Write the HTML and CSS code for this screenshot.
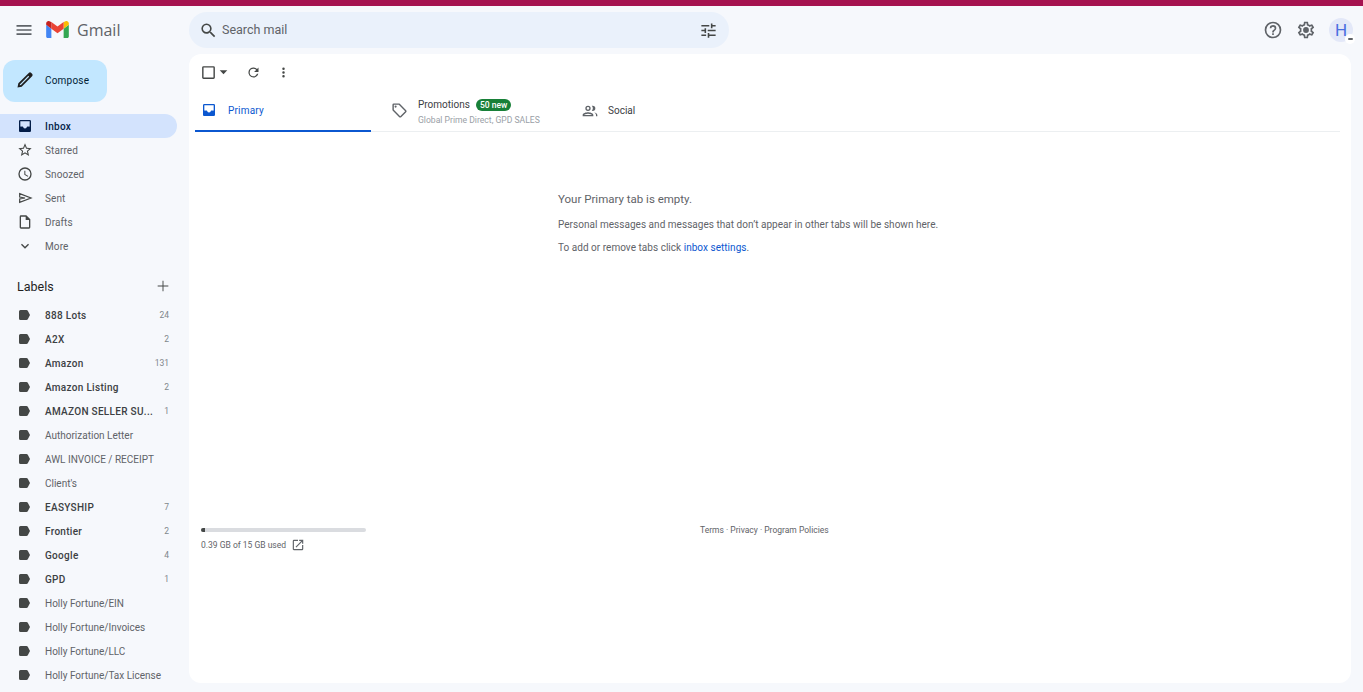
FILE: index.html
```html
<!DOCTYPE html>
<html>
<head>
    <title>Inbox - Gmail</title>
    <link rel="stylesheet" href="styles.css">
</head>
<body>
    <svg class="sprite" width="0" height="0">
        <symbol id="tag" viewBox="0 0 16 16"><path d="M4.500 3h5.900c.6 0 1.100.3 1.400.7L14 8l-2.200 4.300c-.3.4-.8.7-1.400.7H4.500A1.500 1.500 0 0 1 3 11.500v-7A1.500 1.500 0 0 1 4.500 3z"/></symbol>
        <symbol id="tray" viewBox="0 0 24 24"><path d="M19 3H5a2 2 0 0 0-2 2v14c0 1.100.9 2 2 2h14a2 2 0 0 0 2-2V5a2 2 0 0 0-2-2zm0 10h-4a3 3 0 0 1-6 0H5V5h14z"/><path d="M4 13h5a3 3 0 0 0 6 0h5v7H4z"/></symbol>
    </svg>
    <div class="top-strip"></div>
    <div class="app">
        <aside class="sidebar">
            <div class="brand">
                <svg class="menu-icon" viewBox="0 0 24 24" width="20" height="20"><path fill="#5f6368" d="M3 18h18v-2H3v2zm0-5h18v-2H3v2zm0-7v2h18V6H3z"/></svg>
                <svg class="logo" viewBox="0 0 24 18" width="23" height="17">
                    <path fill="#4285f4" d="M0 16.400C0 17.300.7 18 1.600 18h3.900V8.200L0 4.100z"/>
                    <path fill="#34a853" d="M18.500 18h3.900c.9 0 1.600-.7 1.600-1.600V4.100l-5.500 4.100z"/>
                    <path fill="#fbbc04" d="M18.500 1v7.200L24 4.100V2.500c0-2-2.300-3.200-3.900-2z"/>
                    <path fill="#ea4335" d="M5.500 8.200V1L12 5.900 18.500 1v7.200L12 13.100z"/>
                    <path fill="#c5221f" d="M0 2.500v1.600l5.500 4.100V1L3.900.5C2.300-.7 0 .5 0 2.500z"/>
                </svg>
                <span class="brand-name">Gmail</span>
            </div>
            <button class="compose">
                <svg viewBox="0 0 24 24" width="20" height="20"><path fill="#1f1f1f" d="M3 21l1-5L16.500 3.500a2.100 2.100 0 0 1 3 0l1 1a2.100 2.100 0 0 1 0 3L8 20zm2.600-2.600l1.500-.4L17 8l-1-1L6 17z"/></svg>
                <span>Compose</span>
            </button>
            <nav class="nav">
                <a class="nav-item active">
                    <svg class="tray-dark" width="16" height="16"><use href="#tray"/></svg>
                    <span>Inbox</span>
                </a>
                <a class="nav-item">
                    <svg viewBox="0 0 24 24" width="16" height="16"><path fill="#444746" d="M22 9.240l-7.190-.62L12 2 9.190 8.630 2 9.240l5.460 4.730L5.820 21 12 17.270 18.180 21l-1.630-7.030zM12 15.400l-3.760 2.270 1-4.280-3.320-2.880 4.380-.38L12 6.100l1.710 4.040 4.380.38-3.320 2.880 1 4.280z"/></svg>
                    <span>Starred</span>
                </a>
                <a class="nav-item">
                    <svg viewBox="0 0 24 24" width="16" height="16"><path fill="#444746" d="M12 2a10 10 0 1 0 0 20 10 10 0 0 0 0-20zm0 18a8 8 0 1 1 0-16 8 8 0 0 1 0 16zm.500-13H11v6l5.200 3.200.8-1.300-4.500-2.700z"/></svg>
                    <span>Snoozed</span>
                </a>
                <a class="nav-item">
                    <svg viewBox="0 0 24 24" width="16" height="16"><path fill="none" stroke="#444746" stroke-width="1.800" d="M4 5.500L21 12 4 18.500v-5l8-1.500-8-1.500z"/></svg>
                    <span>Sent</span>
                </a>
                <a class="nav-item">
                    <svg viewBox="0 0 24 24" width="16" height="16"><path fill="#444746" d="M14 2H6a2 2 0 0 0-2 2v16c0 1.100.9 2 2 2h12a2 2 0 0 0 2-2V8zm4 18H6V4h7v5h5z"/></svg>
                    <span>Drafts</span>
                </a>
                <a class="nav-item">
                    <svg viewBox="0 0 24 24" width="16" height="16"><path fill="#444746" d="M7.400 8.600L12 13.200l4.600-4.600L18 10l-6 6-6-6z"/></svg>
                    <span>More</span>
                </a>
            </nav>
            <div class="labels-head">
                <span>Labels</span>
                <svg viewBox="0 0 24 24" width="16" height="16"><path fill="#444746" d="M20 12.700h-7.300V20h-1.400v-7.300H4v-1.400h7.300V4h1.400v7.300H20z"/></svg>
            </div>
            <div class="labels">
                <a class="label-row bold"><svg class="tag" width="16" height="16"><use href="#tag"/></svg><span class="label-name">888 Lots</span><span class="count">24</span></a>
                <a class="label-row bold"><svg class="tag" width="16" height="16"><use href="#tag"/></svg><span class="label-name">A2X</span><span class="count">2</span></a>
                <a class="label-row bold"><svg class="tag" width="16" height="16"><use href="#tag"/></svg><span class="label-name">Amazon</span><span class="count">131</span></a>
                <a class="label-row bold"><svg class="tag" width="16" height="16"><use href="#tag"/></svg><span class="label-name">Amazon Listing</span><span class="count">2</span></a>
                <a class="label-row bold"><svg class="tag" width="16" height="16"><use href="#tag"/></svg><span class="label-name">AMAZON SELLER SU...</span><span class="count">1</span></a>
                <a class="label-row"><svg class="tag" width="16" height="16"><use href="#tag"/></svg><span class="label-name">Authorization Letter</span></a>
                <a class="label-row"><svg class="tag" width="16" height="16"><use href="#tag"/></svg><span class="label-name">AWL INVOICE / RECEIPT</span></a>
                <a class="label-row"><svg class="tag" width="16" height="16"><use href="#tag"/></svg><span class="label-name">Client's</span></a>
                <a class="label-row bold"><svg class="tag" width="16" height="16"><use href="#tag"/></svg><span class="label-name">EASYSHIP</span><span class="count">7</span></a>
                <a class="label-row bold"><svg class="tag" width="16" height="16"><use href="#tag"/></svg><span class="label-name">Frontier</span><span class="count">2</span></a>
                <a class="label-row bold"><svg class="tag" width="16" height="16"><use href="#tag"/></svg><span class="label-name">Google</span><span class="count">4</span></a>
                <a class="label-row bold"><svg class="tag" width="16" height="16"><use href="#tag"/></svg><span class="label-name">GPD</span><span class="count">1</span></a>
                <a class="label-row"><svg class="tag" width="16" height="16"><use href="#tag"/></svg><span class="label-name">Holly Fortune/EIN</span></a>
                <a class="label-row"><svg class="tag" width="16" height="16"><use href="#tag"/></svg><span class="label-name">Holly Fortune/Invoices</span></a>
                <a class="label-row"><svg class="tag" width="16" height="16"><use href="#tag"/></svg><span class="label-name">Holly Fortune/LLC</span></a>
                <a class="label-row"><svg class="tag" width="16" height="16"><use href="#tag"/></svg><span class="label-name">Holly Fortune/Tax License</span></a>
            </div>
        </aside>
        <div class="content">
            <header class="topbar">
                <div class="search">
                    <svg viewBox="0 0 24 24" width="19" height="19"><path fill="#444746" d="M15.500 14h-.79l-.28-.27A6.471 6.471 0 0 0 16 9.500 6.500 6.500 0 1 0 9.500 16c1.610 0 3.090-.59 4.230-1.570l.27.28v.79l5 4.990L20.490 19l-4.990-5zm-6 0C7.010 14 5 11.990 5 9.500S7.010 5 9.500 5 14 7.010 14 9.500 11.990 14 9.500 14z"/></svg>
                    <span class="search-text">Search mail</span>
                    <svg class="tune" viewBox="0 0 24 24" width="19" height="19"><path fill="#444746" d="M3 17v2h6v-2zM3 5v2h10V5zm10 16v-2h8v-2h-8v-2h-2v6zM7 9v2H3v2h4v2h2V9zm14 4v-2H11v2zm-6-4h2V7h4V5h-4V3h-2z"/></svg>
                </div>
                <div class="account">
                    <svg viewBox="0 0 24 24" width="20" height="20"><path fill="#5f6368" d="M11 18h2v-2h-2zm1-16a10 10 0 1 0 0 20 10 10 0 0 0 0-20zm0 18a8 8 0 1 1 0-16 8 8 0 0 1 0 16zm0-14a4 4 0 0 0-4 4h2a2 2 0 1 1 4 0c0 2-3 1.750-3 5h2c0-2.250 3-2.500 3-5a4 4 0 0 0-4-4z"/></svg>
                    <svg viewBox="0 0 24 24" width="20" height="20"><path fill="#5f6368" d="M19.430 12.980c.04-.32.07-.64.07-.98 0-.34-.03-.66-.07-.98l2.110-1.650c.19-.15.24-.42.12-.64l-2-3.460a.5.5 0 0 0-.61-.22l-2.490 1c-.52-.4-1.080-.73-1.690-.98l-.38-2.650A.488.488 0 0 0 14 2h-4c-.25 0-.46.18-.49.42l-.38 2.650c-.61.25-1.170.59-1.690.98l-2.490-1a.566.566 0 0 0-.18-.03c-.17 0-.34.09-.43.25l-2 3.460c-.13.22-.07.49.12.64l2.110 1.650c-.04.32-.07.65-.07.98 0 .33.03.66.07.98l-2.110 1.650c-.19.15-.24.42-.12.64l2 3.460a.5.5 0 0 0 .61.22l2.490-1c.52.4 1.080.73 1.690.98l.38 2.650c.03.24.24.42.49.42h4c.25 0 .46-.18.49-.42l.38-2.650c.61-.25 1.170-.59 1.690-.98l2.490 1c.06.02.12.03.18.03.17 0 .34-.09.43-.25l2-3.460c.12-.22.07-.49-.12-.64l-2.110-1.650zm-1.980-1.710c.04.31.05.52.05.73 0 .21-.02.43-.05.73l-.14 1.130.89.7 1.080.84-.7 1.210-1.270-.51-1.040-.42-.9.68c-.43.32-.84.56-1.250.73l-1.060.43-.16 1.130-.2 1.350h-1.400l-.19-1.350-.16-1.130-1.060-.43c-.43-.18-.83-.41-1.230-.71l-.91-.7-1.060.43-1.270.51-.7-1.210 1.080-.84.89-.7-.14-1.130c-.03-.31-.05-.54-.05-.74s.02-.43.05-.73l.14-1.130-.89-.7-1.080-.84.7-1.210 1.270.51 1.040.42.9-.68c.43-.32.84-.56 1.250-.73l1.060-.43.16-1.130.2-1.350h1.390l.19 1.350.16 1.130 1.060.43c.43.18.83.41 1.230.71l.91.7 1.060-.43 1.270-.51.7 1.210-1.070.85-.89.7.14 1.130z"/><circle fill="#5f6368" cx="12" cy="12" r="3.500"/></svg>
                    <div class="avatar">H<span class="avatar-badge"><span class="badge-key"></span></span></div>
                </div>
            </header>
            <main class="card">
                <div class="toolbar">
                    <svg viewBox="0 0 24 24" width="17" height="17"><path fill="#444746" d="M19 3H5a2 2 0 0 0-2 2v14c0 1.100.9 2 2 2h14a2 2 0 0 0 2-2V5a2 2 0 0 0-2-2zm0 16H5V5h14z"/></svg>
                    <svg class="caret" viewBox="0 0 24 24" width="13" height="13"><path fill="#444746" d="M5 8l7 7 7-7z"/></svg>
                    <svg class="refresh" viewBox="0 0 24 24" width="15" height="15"><path fill="#444746" d="M17.650 6.350A8 8 0 1 0 19.700 14h-2.100A6 6 0 1 1 12 6c1.650 0 3.150.7 4.200 1.800L13 11h7V4z"/></svg>
                    <svg class="dots" viewBox="0 0 24 24" width="15" height="15"><path fill="#444746" d="M12 8a2 2 0 1 0 0-4 2 2 0 0 0 0 4zm0 2a2 2 0 1 0 0 4 2 2 0 0 0 0-4zm0 6a2 2 0 1 0 0 4 2 2 0 0 0 0-4z"/></svg>
                </div>
                <div class="tabs">
                    <div class="tab tab-primary">
                        <svg class="tray-blue" width="16" height="16"><use href="#tray"/></svg>
                        <span>Primary</span>
                    </div>
                    <div class="tab tab-promo">
                        <svg viewBox="0 0 24 24" width="17" height="17"><path fill="#5f6368" d="M21.400 11.600l-9-9C12 2.200 11.500 2 11 2H4a2 2 0 0 0-2 2v7c0 .6.200 1.100.6 1.400l9 9c.4.400.9.600 1.400.6s1-.2 1.400-.6l7-7c.4-.4.600-.9.600-1.400s-.2-1-.6-1.400zM13 20l-9-9V4h7l9 9zM6.500 5A1.500 1.500 0 1 0 6.500 8 1.500 1.500 0 0 0 6.500 5z"/></svg>
                        <div class="promo-text">
                            <div class="promo-top"><span>Promotions</span><span class="badge">50 new</span></div>
                            <div class="promo-sub">Global Prime Direct, GPD SALES</div>
                        </div>
                    </div>
                    <div class="tab tab-social">
                        <svg viewBox="0 0 24 24" width="16" height="16"><path fill="#5f6368" d="M9 12a4 4 0 1 0 0-8 4 4 0 0 0 0 8zm0-6a2 2 0 1 1 0 4 2 2 0 0 1 0-4zm0 8c-2.700 0-8 1.300-8 4v2h16v-2c0-2.700-5.300-4-8-4zm-6 4c.2-.7 3.300-2 6-2s5.800 1.300 6 2zM16 12a4 4 0 0 0 0-8c-.5 0-.9.100-1.300.2a6 6 0 0 1 0 7.600c.4.100.8.200 1.300.2zm2.300 2.200c1.500.8 2.700 2 2.700 3.800v2h2v-2c0-2.200-2.700-3.400-4.700-3.800z"/></svg>
                        <span>Social</span>
                    </div>
                </div>
                <div class="empty">
                    <div class="empty-title">Your Primary tab is empty.</div>
                    <p>Personal messages and messages that don’t appear in other tabs will be shown here.</p>
                    <p>To add or remove tabs click <a class="link">inbox settings</a>.</p>
                </div>
                <footer class="footer">
                    <div class="storage">
                        <div class="bar"><div class="bar-fill" style="width: 2.600%"></div></div>
                        <div class="storage-text">
                            <span>0.39 GB of 15 GB used</span>
                            <svg viewBox="0 0 24 24" width="14" height="14"><path fill="#5f6368" d="M19 19H5V5h7V3H5a2 2 0 0 0-2 2v14c0 1.100.9 2 2 2h14a2 2 0 0 0 2-2v-7h-2zM14 3v2h3.600l-9.800 9.800 1.400 1.400L19 6.400V10h2V3z"/></svg>
                        </div>
                    </div>
                    <div class="terms">Terms · Privacy · Program Policies</div>
                </footer>
            </main>
        </div>
    </div>
</body>
</html>
```

FILE: styles.css
```css
* {
    box-sizing: border-box;
}
html, body {
    height: 100%;
}
body {
    margin: 0;
    background-color: #f6f8fc;
    font-family: Roboto, "Liberation Sans", sans-serif;
    font-size: 10px;
    color: #5f6368;
    overflow: hidden;
}
svg {
    display: block;
    flex-shrink: 0;
}
.sprite {
    position: absolute;
}
.top-strip {
    height: 6px;
    background-color: #a5124f;
}
.app {
    display: flex;
    height: 686px;
}

/* sidebar */
.sidebar {
    width: 189px;
    flex-shrink: 0;
    overflow: hidden;
}
.brand {
    display: flex;
    align-items: center;
    height: 47px;
    padding-left: 14px;
}
.logo {
    margin-left: 12px;
}
.brand-name {
    margin-left: 8px;
    font-size: 16px;
    color: #5f6368;
    font-family: "Open Sans", Roboto, sans-serif;
}
.compose {
    display: flex;
    align-items: center;
    width: 104px;
    height: 42px;
    margin: 7px 0 12px 3px;
    padding: 0 0 2px 12px;
    border: none;
    border-radius: 12px;
    background-color: #c2e7ff;
    color: #001d35;
    font-family: inherit;
    font-size: 10px;
    letter-spacing: .2px;
}
.compose span {
    margin-left: 10px;
}
.nav-item, .label-row {
    display: flex;
    align-items: center;
    width: 177px;
    height: 24px;
    padding-left: 16px;
}
.nav-item {
    padding-left: 17px;
    letter-spacing: .1px;
}
.nav-item span {
    margin-left: 12px;
}
.label-name {
    flex: 1;
    min-width: 0;
    margin-left: 13px;
    white-space: nowrap;
}
.tray-dark {
    fill: #041e49;
}
.tray-blue {
    fill: #0b57d0;
}
.nav-item.active {
    background-color: #d3e3fd;
    border-radius: 0 12px 12px 0;
    color: #041e49;
    font-weight: 500;
    letter-spacing: .3px;
}
.labels-head {
    display: flex;
    align-items: center;
    justify-content: space-between;
    width: 177px;
    height: 24px;
    margin-top: 16px;
    padding: 0 6px 0 17px;
    font-size: 12.500px;
    color: #1f1f1f;
}
.labels {
    margin-top: 5px;
}
.tag {
    fill: #444746;
}
.label-row.bold {
    color: #3c4043;
    font-weight: 500;
    letter-spacing: .3px;
}
.count {
    margin: 0 8px 0 7px;
    font-size: 8.500px;
    font-weight: 400;
    letter-spacing: 0;
    color: #80868b;
}

/* header */
.content {
    flex: 1;
    min-width: 0;
    display: flex;
    flex-direction: column;
    padding-right: 12px;
}
.topbar {
    display: flex;
    align-items: center;
    justify-content: space-between;
    height: 48px;
}
.search {
    display: flex;
    align-items: center;
    width: 540px;
    height: 36px;
    padding: 0 10px;
    border-radius: 18px;
    background-color: #eaf1fb;
}
.search-text {
    flex: 1;
    margin: 0 0 1px 4px;
    font-size: 12.500px;
    color: #5f6368;
}
.tune {
    margin-right: 1px;
}
.account {
    display: flex;
    align-items: center;
    gap: 13px;
    margin-right: -2px;
}
.avatar {
    position: relative;
    width: 24px;
    height: 24px;
    border-radius: 50%;
    background-color: #e3e8f8;
    color: #4a6ee0;
    font-size: 17px;
    line-height: 24px;
    text-align: center;
}
.avatar-badge {
    position: absolute;
    right: -2px;
    bottom: -2px;
    display: flex;
    align-items: center;
    justify-content: center;
    width: 10px;
    height: 10px;
    border-radius: 50%;
    background-color: #fff;
}
.badge-key {
    width: 5px;
    height: 2px;
    border-radius: 1px;
    background-color: #5f6368;
}

/* main card */
.card {
    display: flex;
    flex-direction: column;
    height: 629px;
    padding: 0 11px 0 6px;
    border-radius: 12px;
    background-color: #fff;
}
.toolbar {
    display: flex;
    align-items: center;
    height: 36px;
    padding-left: 5px;
}
.refresh {
    margin-left: 16px;
}
.dots {
    margin-left: 15px;
}
.tabs {
    display: flex;
    height: 42px;
    border-bottom: 1px solid #eceff1;
}
.tab {
    display: flex;
    align-items: center;
}
.tab-primary {
    width: 176px;
    margin-bottom: -1px;
    padding-left: 6px;
    border-bottom: 2px solid #0b57d0;
    color: #0b57d0;
    letter-spacing: .2px;
}
.tab-primary span {
    margin-left: 11px;
}
.tab-promo {
    width: 211px;
    padding-left: 20px;
}
.promo-text {
    margin-left: 10px;
    padding-top: 2px;
}
.promo-top {
    display: flex;
    align-items: center;
    gap: 6px;
    color: #3c4043;
}
.badge {
    padding: 0 4px;
    border-radius: 7px;
    background-color: #188038;
    color: #fff;
    font-size: 8.500px;
    font-weight: 500;
    line-height: 12px;
}
.promo-sub {
    margin-top: 4px;
    font-size: 8.600px;
    color: #9aa0a6;
}
.tab-social span {
    margin-left: 10px;
    color: #3c4043;
}
.empty {
    flex: 1;
    padding: 59px 0 0 363px;
}
.empty-title {
    font-size: 11.500px;
    line-height: 16px;
    color: #5f6368;
}
.empty p {
    margin: 11px 0 0;
    font-size: 10px;
    line-height: 14px;
    letter-spacing: .03px;
}
.empty p + p {
    margin-top: 9px;
}
.link {
    color: #0b57d0;
}
.footer {
    display: flex;
    height: 155px;
}
.storage {
    width: 165px;
    margin-left: 6px;
}
.bar {
    height: 4px;
    border-radius: 2px;
    background-color: #dadce0;
    overflow: hidden;
}
.bar-fill {
    height: 100%;
    background-color: #444746;
}
.storage-text {
    display: flex;
    align-items: center;
    gap: 5px;
    margin-top: 6px;
    font-size: 8.500px;
    color: #5f6368;
}
.terms {
    margin: -3px 0 0 334px;
    font-size: 8.500px;
    color: #5f6368;
}
```
